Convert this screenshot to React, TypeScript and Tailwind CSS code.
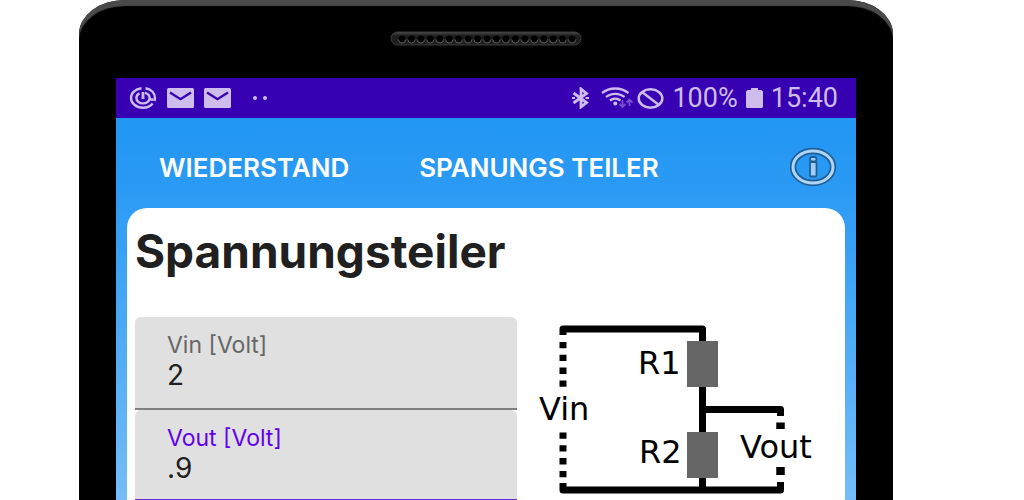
import { useState } from "react";

function CycleIcon() {
  return (
    <svg width="28" height="24" viewBox="0 0 28 24" fill="none" stroke="#cdbcec" strokeWidth="2.400" aria-hidden="true">
      <path d="M12.500 2.200C6 3 2 7 2 12s5 9.800 12 9.800c4.300 0 7.500-1.500 9.600-4.300" />
      <path d="M16.500 2.200C22 3 26 7 26 12c0 1-.2 2-.6 3" />
      <path d="M24.500 13.800l-3.500-.6" />
      <path d="M10.500 7.300C8.500 8.200 7.400 10 7.400 12c0 3 2.800 5.400 6.600 5.400s6.600-2.400 6.600-5.400c0-2.500-2-4.600-4.600-5.200" />
      <path d="M14 6v7" strokeWidth="2.800" />
    </svg>
  );
}

function MailIcon() {
  return (
    <svg width="27" height="20" viewBox="0 0 27 20" aria-hidden="true">
      <rect width="27" height="20" rx="1.500" fill="#cdbcec" />
      <path d="M3 4.500l10.500 6.700L24 4.500" fill="none" stroke="#3700b3" strokeWidth="2.400" />
    </svg>
  );
}

function BluetoothIcon() {
  return (
    <svg width="17" height="22" viewBox="0 0 17 22" fill="none" stroke="#cdbcec" strokeWidth="2.800" aria-hidden="true">
      <path d="M1.500 6l13 9.500L9 20V2l5.500 4.500L1.500 16" />
      <path d="M0 11h3M13.500 11H17" strokeWidth="2.200" />
    </svg>
  );
}

function WifiIcon() {
  return (
    <svg width="32" height="22" viewBox="0 0 32 22" fill="none" stroke="#cdbcec" strokeWidth="2.300" aria-hidden="true">
      <path d="M1 6C8.500 0 20 0 27.500 6" />
      <path d="M5 10c5-4.300 13.500-4.300 18.500 0" />
      <path d="M9 13.500c3-2.400 7.500-2.400 10.500 0" />
      <circle cx="14.300" cy="16.500" r="2" fill="#cdbcec" stroke="none" />
      <g stroke="#7a50cf" strokeWidth="1.800">
        <path d="M21.500 13v7M18.500 17l3 3 3-3M28.500 19v-6.500M25.500 15.500l3-3 3 3" />
      </g>
    </svg>
  );
}

function BlockedIcon() {
  return (
    <svg width="27" height="21" viewBox="0 0 27 21" fill="none" stroke="#cdbcec" strokeWidth="2.500" aria-hidden="true">
      <ellipse cx="13.500" cy="10.500" rx="11.800" ry="9.200" />
      <path d="M5 4l17 13" />
    </svg>
  );
}

function BatteryIcon() {
  return (
    <svg width="17" height="20" viewBox="0 0 17 20" fill="#cdbcec" aria-hidden="true">
      <path d="M5 0h7v2h3.500L17 3.500V19l-1 1H1l-1-1V3.500L1.500 2H5z" />
    </svg>
  );
}

function InfoIcon() {
  return (
    <svg width="48" height="40" viewBox="0 0 48 40" fill="none" aria-hidden="true">
      <ellipse cx="24" cy="20" rx="20" ry="16" stroke="#1f5f96" strokeWidth="6.400" />
      <ellipse cx="24" cy="20" rx="20" ry="16" stroke="#b0d6f7" strokeWidth="3" />
      <g fill="#9fcdf5" stroke="#1f5f96" strokeWidth="1.800">
        <rect x="21" y="15" width="6.500" height="14.500" rx="1" />
        <rect x="21" y="10" width="6.500" height="4.500" rx="2" />
      </g>
    </svg>
  );
}

function Speaker() {
  return (
    <svg width="192" height="16" viewBox="0 0 192 16" aria-hidden="true">
      <defs>
        <linearGradient id="grille" x1="0" y1="0" x2="0" y2="1">
          <stop offset="0" stopColor="#4a4a4a" />
          <stop offset=".3" stopColor="#1c1c1c" />
          <stop offset="1" stopColor="#202020" />
        </linearGradient>
      </defs>
      <rect x="1" y="1" width="190" height="13" rx="6.500" fill="url(#grille)" stroke="#3c3c3c" />
      {Array.from({ length: 19 }, (_, i) => (
        <g key={i}>
          <circle cx={12 + i * 9.45} cy="8" r="3.500" fill="#000" />
          <path d={`M${8.4 + i * 9.45} 8.500a3.600 3.600 0 0 0 7.200 0`} fill="none" stroke="#5c5c5c" />
        </g>
      ))}
    </svg>
  );
}

function Circuit() {
  return (
    <svg
      width="284"
      height="176"
      viewBox="0 0 284 176"
      role="img"
      aria-label="Spannungsteiler"
      className="shrink-0"
      fontFamily='"DejaVu Sans", sans-serif'
      fontSize="32"
    >
      <g fill="none" stroke="#000" strokeWidth="7" strokeLinejoin="round">
        <path d="M26 16V10H165.500V168" />
        <path d="M166 90.500H243.500V97" />
        <path d="M26 164V171H243.500V163" />
        <path d="M26 23V68" strokeDasharray="6.300 6.500" />
        <path d="M26 113.500V163" strokeDasharray="6.300 6.500" />
        <path d="M243.500 103.500V110M243.500 148V156" strokeWidth="8.500" />
      </g>
      <path d="M150 22h31v46h-31zM150 113h31v46h-31z" fill="#666" />
      <text x="101" y="55">R1</text>
      <text x="102" y="144">R2</text>
      <text x="2" y="101">Vin</text>
      <text x="203" y="139">Vout</text>
    </svg>
  );
}

interface FieldProps {
  id: string;
  label: string;
  value: string;
  active?: boolean;
  onChange: (value: string) => void;
}

function Field({ id, label, value, active = false, onChange }: FieldProps) {
  return (
    <div
      className={`flex flex-col rounded-t-md bg-[#e0e0e0] px-8 pt-4 ${
        active ? "border-b-[3px] border-[#6d28d9] pb-[13px]" : "border-b-2 border-[#808080] pb-[15px]"
      }`}
    >
      <label htmlFor={id} className={`text-[23px] leading-6 ${active ? "text-[#6200ee]" : "text-[#666]"}`}>
        {label}
      </label>
      <input
        id={id}
        type="text"
        inputMode="decimal"
        value={value}
        onChange={(e) => onChange(e.target.value)}
        className="h-9 w-full bg-transparent text-[28px] leading-9 text-[#202020] outline-none"
      />
    </div>
  );
}

export default function App() {
  const [vin, setVin] = useState("2");
  const [vout, setVout] = useState(".9");

  return (
    <div className="h-screen overflow-hidden bg-white pr-[131px] pl-[79px] font-[Inter,sans-serif]">
      <div className="flex min-h-full flex-col rounded-t-[46px_34px] bg-black px-[37px] shadow-[inset_0_6px_1px_#4a4a4a]">
        <div className="flex h-[78px] items-center justify-center">
          <Speaker />
        </div>
        <div className="flex h-10 items-center justify-between bg-[#3700b3] pr-[18px] pl-[13px] font-[Roboto,sans-serif] text-[27px] leading-[42px] text-[#cdbcec]">
          <div className="flex items-center gap-2.5">
            <CycleIcon />
            <MailIcon />
            <MailIcon />
            <span className="ml-3 flex gap-1.5">
              <i className="size-1 rounded-full bg-current" />
              <i className="size-1 rounded-full bg-current" />
            </span>
          </div>
          <div className="flex items-center gap-2">
            <div className="flex items-center gap-1">
              <BluetoothIcon />
              <span className="ml-2 flex">
                <WifiIcon />
              </span>
              <BlockedIcon />
            </div>
            <span>100%</span>
            <BatteryIcon />
            <span>15:40</span>
          </div>
        </div>
        <div className="flex flex-1 flex-col bg-[linear-gradient(#2196f3,#2b9af4_70px,#3da3f5_150px,#74bdf8_382px)] px-[11px]">
          <nav className="flex h-[90px] items-center pt-2 pr-2 pl-8 text-[26px] leading-8 font-semibold whitespace-nowrap text-white">
            <a href="#wiederstand" className="mr-[70px] pt-0.5">
              WIEDERSTAND
            </a>
            <a href="#spannungsteiler" className="pt-0.5">
              SPANUNGS TEILER
            </a>
            <button type="button" aria-label="Info" className="ml-auto">
              <InfoIcon />
            </button>
          </nav>
          <main className="flex-1 rounded-t-[20px] bg-white px-2 pt-4">
            <h1 className="text-[46px] leading-[54px] font-bold text-[#202020]">Spannungsteiler</h1>
            <div className="mt-[39px] flex gap-5">
              <form className="flex min-w-0 flex-1 flex-col">
                <Field id="vin" label="Vin [Volt]" value={vin} onChange={setVin} />
                <Field id="vout" label="Vout [Volt]" value={vout} onChange={setVout} active />
              </form>
              <div className="flex w-[300px] shrink-0 pt-0.5">
                <Circuit />
              </div>
            </div>
          </main>
        </div>
      </div>
    </div>
  );
}
